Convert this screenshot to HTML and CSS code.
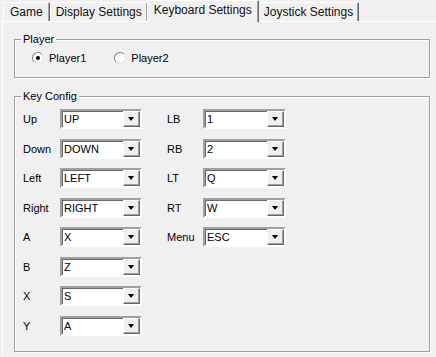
FILE: index.html
```html
<!DOCTYPE html>
<html lang="en">
<head>
  <meta charset="UTF-8">
  <title>Keyboard Settings</title>
  <link rel="stylesheet" href="styles.css">
</head>
<body>
  <div class="tabs">
    <div class="tab first">Game</div>
    <div class="tab">Display Settings</div>
    <div class="tab active">Keyboard Settings</div>
    <div class="tab">Joystick Settings</div>
  </div>

  <div class="panel">
    <fieldset class="group player-group">
      <legend>Player</legend>
      <div class="radio-row">
        <label class="radio-item"><span class="radio checked"></span>Player1</label>
        <label class="radio-item"><span class="radio"></span>Player2</label>
      </div>
    </fieldset>

    <fieldset class="group key-group">
      <legend>Key Config</legend>
      <div class="key-cols">
        <div class="key-col">
          <div class="key-row"><span class="key-label">Up</span><div class="combo"><span class="combo-text">UP</span><span class="combo-btn"></span></div></div>
          <div class="key-row"><span class="key-label">Down</span><div class="combo"><span class="combo-text">DOWN</span><span class="combo-btn"></span></div></div>
          <div class="key-row"><span class="key-label">Left</span><div class="combo"><span class="combo-text">LEFT</span><span class="combo-btn"></span></div></div>
          <div class="key-row"><span class="key-label">Right</span><div class="combo"><span class="combo-text">RIGHT</span><span class="combo-btn"></span></div></div>
          <div class="key-row"><span class="key-label">A</span><div class="combo"><span class="combo-text">X</span><span class="combo-btn"></span></div></div>
          <div class="key-row"><span class="key-label">B</span><div class="combo"><span class="combo-text">Z</span><span class="combo-btn"></span></div></div>
          <div class="key-row"><span class="key-label">X</span><div class="combo"><span class="combo-text">S</span><span class="combo-btn"></span></div></div>
          <div class="key-row"><span class="key-label">Y</span><div class="combo"><span class="combo-text">A</span><span class="combo-btn"></span></div></div>
        </div>
        <div class="key-col right">
          <div class="key-row"><span class="key-label">LB</span><div class="combo"><span class="combo-text">1</span><span class="combo-btn"></span></div></div>
          <div class="key-row"><span class="key-label">RB</span><div class="combo"><span class="combo-text">2</span><span class="combo-btn"></span></div></div>
          <div class="key-row"><span class="key-label">LT</span><div class="combo"><span class="combo-text">Q</span><span class="combo-btn"></span></div></div>
          <div class="key-row"><span class="key-label">RT</span><div class="combo"><span class="combo-text">W</span><span class="combo-btn"></span></div></div>
          <div class="key-row"><span class="key-label">Menu</span><div class="combo"><span class="combo-text">ESC</span><span class="combo-btn"></span></div></div>
        </div>
      </div>
    </fieldset>
  </div>
</body>
</html>
```

FILE: styles.css
```css
body {
  margin: 0;
  background: #f0f0f0;
  font-family: "Liberation Sans", Arial, sans-serif;
  font-size: 11px;
  color: #000;
  height: 357px;
  overflow: hidden;
}
.tabs {
  display: flex;
  align-items: flex-end;
  height: 21px;
  padding-left: 3px;
}
.tab {
  height: 18px;
  line-height: 19px;
  padding: 0 5px;
  font-size: 12px;
  color: #111;
  border-top: 1px solid #fff;
  border-left: 1px solid #fff;
  border-right: 1px solid #696969;
  box-shadow: inset -1px 0 0 #a0a0a0;
}
.tab.first {
  padding: 0 6px 0 6px;
}
.tab.active {
  position: relative;
  height: 21px;
  line-height: 18px;
  padding: 0 6px;
  margin: 0 -1px -1px -1px;
  z-index: 1;
  background: #f0f0f0;
}
.panel {
  margin-left: 2px;
  width: 416px;
  height: 324px;
  border-top: 1px solid #fff;
  border-left: 1px solid #fff;
  border-right: 1px solid #696969;
  box-shadow: inset -1px 0 0 #a0a0a0;
  padding: 10px 14px 0 11px;
}
.group {
  margin: 0;
  border: 1px solid #a0a0a0;
  box-shadow: 1px 1px 0 #fff, inset 1px 1px 0 #fff;
  padding: 0 6px;
  min-width: 0;
}
.group legend {
  padding: 0 2px;
  line-height: 14px;
  font-size: 11px;
}
.player-group {
  padding-top: 5px;
  padding-bottom: 12px;
}
.radio-row {
  display: flex;
  align-items: center;
  height: 14px;
  padding-left: 11px;
  gap: 28px;
}
.radio-item {
  display: flex;
  align-items: center;
  gap: 5px;
}
.radio {
  position: relative;
  width: 10px;
  height: 10px;
  border-radius: 50%;
  background: #fff;
  border: 1px solid;
  border-color: #808080 #e3e3e3 #e3e3e3 #808080;
}
.radio.checked::after {
  content: "";
  position: absolute;
  left: 3px;
  top: 3px;
  width: 4px;
  height: 4px;
  border-radius: 50%;
  background: #000;
}
.key-group {
  margin-top: 11px;
  padding-top: 6px;
  padding-bottom: 15px;
}
.key-cols {
  display: flex;
  gap: 25px;
  padding-left: 2px;
}
.key-col {
  display: flex;
  flex-direction: column;
  gap: 9.5px;
}
.key-row {
  display: flex;
  align-items: center;
}
.key-label {
  width: 37px;
}
.key-col.right .key-label {
  width: 36px;
}
.combo {
  width: 78px;
  height: 16px;
  background: #fff;
  border: 2px solid;
  border-color: #a0a0a0 #fff #fff #a0a0a0;
  box-shadow: inset 1px 1px 0 #696969;
  display: flex;
  align-items: center;
}
.key-col.right .combo {
  width: 79px;
}
.combo-text {
  flex: 1;
  padding-left: 2px;
  line-height: 16px;
}
.combo-btn {
  position: relative;
  width: 15px;
  height: 14px;
  margin: 1px 0;
  background: #f0f0f0;
  border: 1px solid;
  border-color: #fff #696969 #696969 #fff;
  box-shadow: inset -1px -1px 0 #a0a0a0;
}
.combo-btn::after {
  content: "";
  position: absolute;
  left: 4px;
  top: 5px;
  border-left: 3.5px solid transparent;
  border-right: 3.5px solid transparent;
  border-top: 4px solid #000;
}
```
